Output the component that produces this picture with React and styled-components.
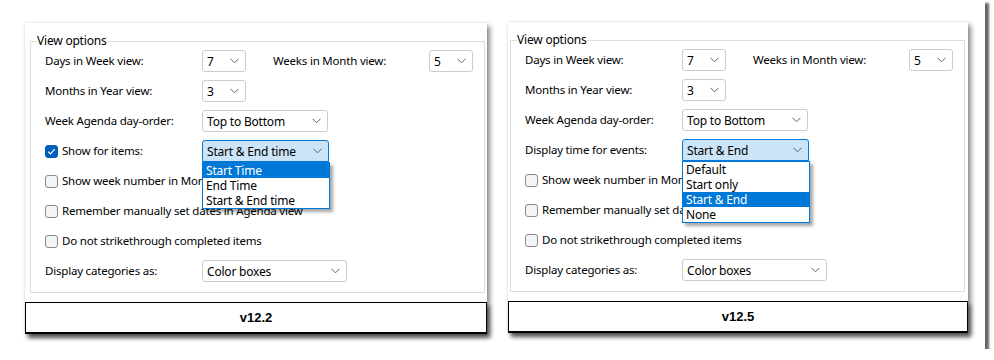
import React from "react";
import styled, { createGlobalStyle } from "styled-components";

const Global = createGlobalStyle`
  html, body {
    margin: 0;
    padding: 0;
    background: #ffffff;
  }
  body {
    font-family: "Noto Sans", "Open Sans", Arial, sans-serif;
    font-size: 11.5px;
    letter-spacing: -0.2px;
    color: #000000;
  }
`;

const Frame = styled.div`
  width: 985px;
  height: 349px;
  background: #ffffff;
  box-shadow: 4px 3px 2px rgba(0, 0, 0, 0.6);
  box-sizing: border-box;
  padding: 23px 0 0 25px;
  display: flex;
  align-items: flex-start;
  gap: 21px;
`;

const Panel = styled.div`
  width: ${(p) => p.width}px;
  margin-top: ${(p) => p.lift || 0}px;
  background: #ffffff;
  box-shadow: 3px 3px 5px rgba(0, 0, 0, 0.45), 0 0 2px rgba(0, 0, 0, 0.12);
  padding-top: 11px;
  display: flex;
  flex-direction: column;
`;

const Group = styled.fieldset`
  margin: 0 ${(p) => p.right}px 0 ${(p) => p.left}px;
  padding: 2px 0 10px 14px;
  border: 1px solid #dcdcdc;
  display: flex;
  flex-direction: column;
  gap: 8px;
  min-width: 0;
`;

const Legend = styled.legend`
  padding: 0 1px 0 0;
  margin-left: -8px;
  font-size: 12px;
  letter-spacing: -0.2px;
  line-height: 14px;
`;

const Row = styled.div`
  display: flex;
  align-items: center;
  height: 22px;
`;

const Label = styled.span`
  width: ${(p) => p.width}px;
  flex: none;
  white-space: nowrap;
  line-height: 16px;
`;

const Spacer = styled.span`
  width: ${(p) => p.width}px;
  flex: none;
`;

const ComboWrap = styled.div`
  position: relative;
  flex: none;
`;

const Combo = styled.div`
  width: ${(p) => p.width}px;
  height: 22px;
  box-sizing: border-box;
  border: 1px solid ${(p) => (p.open ? "#0078d7" : "#cccccc")};
  border-radius: ${(p) => (p.open ? "3px 3px 0 0" : "3px")};
  background: ${(p) => (p.open ? "#cce4f7" : "#ffffff")};
  display: flex;
  align-items: center;
  justify-content: space-between;
  padding: 0 6px 0 4px;
  white-space: nowrap;
  font-size: 12px;
`;

const List = styled.div`
  position: absolute;
  top: 100%;
  left: 0;
  width: 128px;
  box-sizing: border-box;
  border: 1px solid #0078d7;
  background: #ffffff;
  box-shadow: 3px 3px 3px rgba(0, 0, 0, 0.35);
  z-index: 5;
`;

const Item = styled.div`
  height: 15px;
  line-height: 15px;
  padding-left: 3px;
  white-space: nowrap;
  font-size: 12px;
  background: ${(p) => (p.active ? "#0078d7" : "transparent")};
  color: ${(p) => (p.active ? "#ffffff" : "#000000")};
`;

const Check = styled.span`
  width: 13px;
  height: 13px;
  box-sizing: border-box;
  flex: none;
  border-radius: 3px;
  border: 1px solid ${(p) => (p.checked ? "#005fb8" : "#8a8a8a")};
  background: ${(p) => (p.checked ? "#005fb8" : "#f4f4f4")};
  margin-right: 4px;
  display: flex;
  align-items: center;
  justify-content: center;
`;

const Version = styled.div`
  margin: 9px 0 0 0;
  height: 32px;
  box-sizing: border-box;
  border: 1px solid #000000;
  border-bottom-width: 2px;
  box-shadow: 3px 4px 4px rgba(0, 0, 0, 0.45);
  display: flex;
  align-items: center;
  justify-content: center;
  font-family: "Liberation Sans", Arial, sans-serif;
  font-weight: 700;
  font-size: 13px;
  letter-spacing: 0;
`;

const Chevron = () => (
  <svg width="9" height="6" viewBox="0 0 9 6">
    <path d="M0.5 0.8 L4.5 4.8 L8.5 0.8" fill="none" stroke="#606060" strokeWidth="1" />
  </svg>
);

const Tick = () => (
  <svg width="11" height="11" viewBox="0 0 11 11">
    <path d="M2.2 5.6 L4.4 7.8 L8.8 3.2" fill="none" stroke="#ffffff" strokeWidth="1.2" />
  </svg>
);

function Select({ width, value, options, active }) {
  const open = !!options;
  return (
    <ComboWrap>
      <Combo width={width} open={open}>
        <span>{value}</span>
        <Chevron />
      </Combo>
      {open && (
        <List>
          {options.map((o) => (
            <Item key={o} active={o === active}>
              {o}
            </Item>
          ))}
        </List>
      )}
    </ComboWrap>
  );
}

function CheckRow({ checked, children }) {
  return (
    <Row>
      <Check checked={checked}>{checked && <Tick />}</Check>
      <Label>{children}</Label>
    </Row>
  );
}

function ViewOptions({ version, width, lift, left, right, timeRow }) {
  return (
    <Panel width={width} lift={lift}>
      <Group left={left} right={right}>
        <Legend>View options</Legend>
        <Row>
          <Label width={157}>Days in Week view:</Label>
          <Select width={44} value="7" />
          <Spacer width={27} />
          <Label width={156}>Weeks in Month view:</Label>
          <Select width={44} value="5" />
        </Row>
        <Row>
          <Label width={157}>Months in Year view:</Label>
          <Select width={44} value="3" />
        </Row>
        <Row>
          <Label width={157}>Week Agenda day-order:</Label>
          <Select width={126} value="Top to Bottom" />
        </Row>
        {timeRow}
        <CheckRow>Show week number in Month view</CheckRow>
        <CheckRow>Remember manually set dates in Agenda view</CheckRow>
        <CheckRow>Do not strikethrough completed items</CheckRow>
        <Row>
          <Label width={157}>Display categories as:</Label>
          <Select width={145} value="Color boxes" />
        </Row>
      </Group>
      <Version>{version}</Version>
    </Panel>
  );
}

export default function App() {
  return (
    <>
      <Global />
      <Frame>
        <ViewOptions
          version="v12.2"
          width={462}
          left={5}
          right={2}
          timeRow={
            <Row>
              <Check checked>
                <Tick />
              </Check>
              <Label width={140}>Show for items:</Label>
              <Select
                width={127}
                value="Start & End time"
                options={["Start Time", "End Time", "Start & End time"]}
                active="Start Time"
              />
            </Row>
          }
        />
        <ViewOptions
          version="v12.5"
          width={460}
          lift={-1}
          left={2}
          right={3}
          timeRow={
            <Row>
              <Label width={157}>Display time for events:</Label>
              <Select
                width={127}
                value="Start & End"
                options={["Default", "Start only", "Start & End", "None"]}
                active="Start & End"
              />
            </Row>
          }
        />
      </Frame>
    </>
  );
}
